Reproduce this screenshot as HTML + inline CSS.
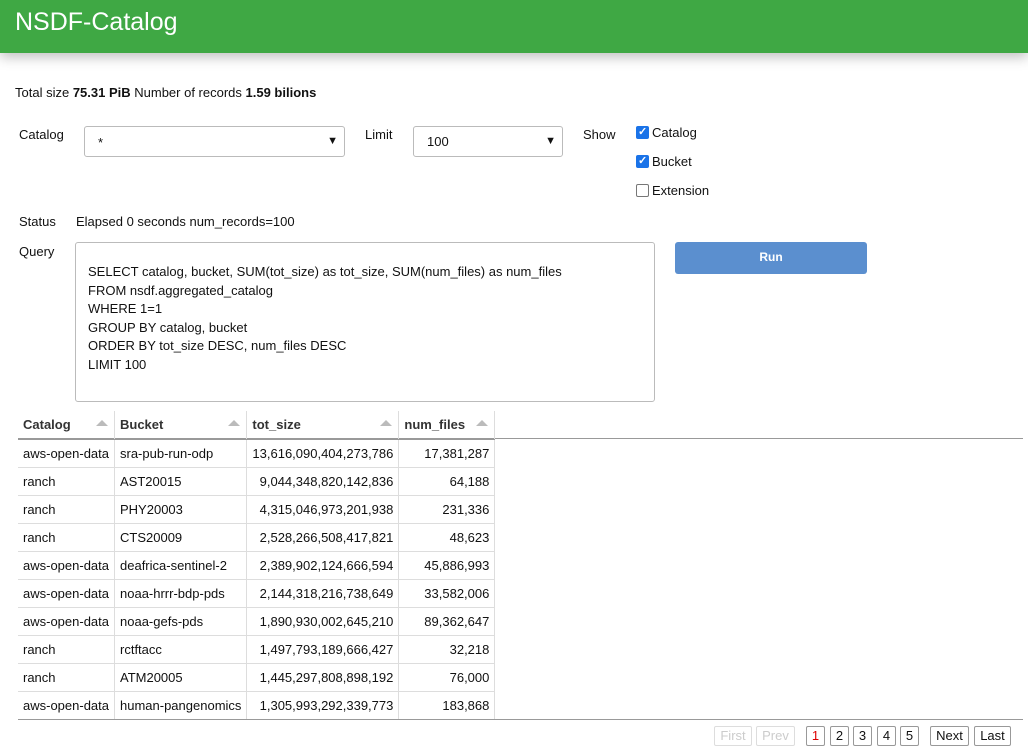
<!DOCTYPE html>
<html><head><style>
*{box-sizing:border-box}
body{margin:0;width:1028px;height:751px;overflow:hidden;font-family:"Liberation Sans",Arial,sans-serif;font-size:13px;color:#111;background:#fff;position:relative}
.a{position:absolute}
.hdr{left:0;top:0;width:1028px;height:53px;background:#3fa844;box-shadow:0 4px 12px rgba(0,0,0,.25)}
.hdr span{position:absolute;left:15px;top:8px;font-size:25px;color:#fff}
.sel{border:1px solid #bbb;border-radius:3px;background:#fff}
.sel .ar{position:absolute;right:6px;top:8px;font-size:11px}
.cb{width:13px;height:13px;border-radius:2px}
.cb.on{background:#1a73e8}
.cb.on::after{content:"✓";color:#fff;font-size:11px;position:absolute;left:2px;top:-1px;font-weight:bold}
.cb.off{border:1px solid #777}
table{border-collapse:collapse;position:absolute;left:18px;top:411px}
td,th{height:28px;padding:0 5px;border-right:1px solid #ddd;white-space:nowrap;font-size:13px}
th{text-align:left;font-weight:bold;color:#333;border-bottom:1px solid #999;position:relative}
th .s{position:absolute;right:6px;top:9px;width:0;height:0;border-left:6px solid transparent;border-right:6px solid transparent;border-bottom:6px solid #bbb}
td{border-bottom:1px solid #ddd}
td.r{text-align:right}
.pb{top:726px;height:20px;border:1px solid #999;border-radius:2px;font-size:13px;text-align:center;line-height:18px;padding:0 3px}
.dis{color:#ccc;border-color:#ddd}
</style></head><body>
<div class="a hdr"><span>NSDF-Catalog</span></div>
<div class="a" style="left:15px;top:85px">Total size <b>75.31 PiB</b> Number of records <b>1.59 bilions</b></div>
<div class="a" style="left:19px;top:127px">Catalog</div>
<div class="a sel" style="left:84px;top:126px;width:261px;height:31px"><span class="a" style="left:13px;top:8px">*</span><span class="ar">▼</span></div>
<div class="a" style="left:365px;top:127px">Limit</div>
<div class="a sel" style="left:413px;top:126px;width:150px;height:31px"><span class="a" style="left:13px;top:7px">100</span><span class="ar">▼</span></div>
<div class="a" style="left:583px;top:127px">Show</div>
<div class="a cb on" style="left:636px;top:126px"></div><div class="a" style="left:652px;top:125px">Catalog</div>
<div class="a cb on" style="left:636px;top:155px"></div><div class="a" style="left:652px;top:154px">Bucket</div>
<div class="a cb off" style="left:636px;top:184px"></div><div class="a" style="left:652px;top:183px">Extension</div>
<div class="a" style="left:19px;top:214px">Status</div>
<div class="a" style="left:76px;top:214px">Elapsed 0 seconds num_records=100</div>
<div class="a" style="left:19px;top:244px">Query</div>
<div class="a" style="left:75px;top:242px;width:580px;height:160px;border:1px solid #bbb;border-radius:3px;padding:20px 12px;line-height:18.5px">SELECT catalog, bucket, SUM(tot_size) as tot_size, SUM(num_files) as num_files<br>FROM nsdf.aggregated_catalog<br>WHERE 1=1<br>GROUP BY catalog, bucket<br>ORDER BY tot_size DESC, num_files DESC<br>LIMIT 100</div>
<div class="a" style="left:675px;top:242px;width:192px;height:32px;background:#5b8fcf;border-radius:3px;color:#fff;font-weight:bold;text-align:center;line-height:30px;font-size:12px">Run</div>
<div class="a" style="left:18px;top:438px;width:1005px;height:1px;background:#999"></div>
<table>
<tr><th style="width:96px">Catalog<i class="s"></i></th><th style="width:132px">Bucket<i class="s"></i></th><th style="width:150px">tot_size<i class="s"></i></th><th style="width:96px">num_files<i class="s"></i></th></tr>
<tr><td>aws-open-data</td><td>sra-pub-run-odp</td><td class="r">13,616,090,404,273,786</td><td class="r">17,381,287</td></tr>
<tr><td>ranch</td><td>AST20015</td><td class="r">9,044,348,820,142,836</td><td class="r">64,188</td></tr>
<tr><td>ranch</td><td>PHY20003</td><td class="r">4,315,046,973,201,938</td><td class="r">231,336</td></tr>
<tr><td>ranch</td><td>CTS20009</td><td class="r">2,528,266,508,417,821</td><td class="r">48,623</td></tr>
<tr><td>aws-open-data</td><td>deafrica-sentinel-2</td><td class="r">2,389,902,124,666,594</td><td class="r">45,886,993</td></tr>
<tr><td>aws-open-data</td><td>noaa-hrrr-bdp-pds</td><td class="r">2,144,318,216,738,649</td><td class="r">33,582,006</td></tr>
<tr><td>aws-open-data</td><td>noaa-gefs-pds</td><td class="r">1,890,930,002,645,210</td><td class="r">89,362,647</td></tr>
<tr><td>ranch</td><td>rctftacc</td><td class="r">1,497,793,189,666,427</td><td class="r">32,218</td></tr>
<tr><td>ranch</td><td>ATM20005</td><td class="r">1,445,297,808,898,192</td><td class="r">76,000</td></tr>
<tr><td>aws-open-data</td><td>human-pangenomics</td><td class="r">1,305,993,292,339,773</td><td class="r">183,868</td></tr>
</table>
<div class="a" style="left:18px;top:719px;width:1005px;height:1px;background:#999"></div>
<div class="a pb dis" style="left:714px;width:38px">First</div>
<div class="a pb dis" style="left:756px;width:39px">Prev</div>
<div class="a pb" style="left:806px;width:19px;color:#d00">1</div>
<div class="a pb" style="left:830px;width:19px">2</div>
<div class="a pb" style="left:853px;width:19px">3</div>
<div class="a pb" style="left:877px;width:19px">4</div>
<div class="a pb" style="left:900px;width:19px">5</div>
<div class="a pb" style="left:930px;width:39px">Next</div>
<div class="a pb" style="left:974px;width:37px">Last</div>
</body></html>
